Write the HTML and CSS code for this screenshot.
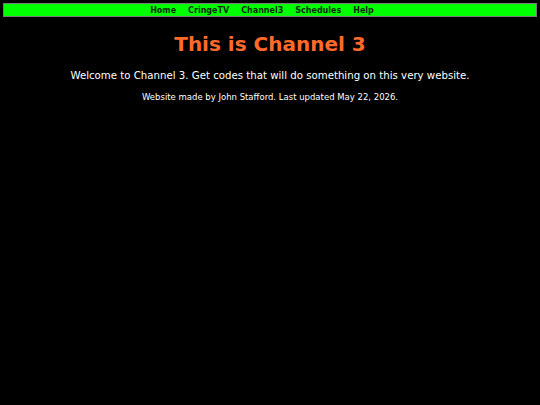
FILE: index.html
```html
<!DOCTYPE html>
<html>
<head>
<meta charset="utf-8">
<link rel="stylesheet" href="styles.css">
</head>
<body>
<nav class="nav">
  <a class="nav-link" href="#">Home</a>
  <a class="nav-link" href="#">CringeTV</a>
  <a class="nav-link" href="#">Channel3</a>
  <a class="nav-link" href="#">Schedules</a>
  <a class="nav-link" href="#">Help</a>
</nav>
<h1 class="title">This is Channel 3</h1>
<p class="intro">Welcome to Channel 3. Get codes that will do something on this very website.</p>
<p class="credits">Website made by John Stafford. Last updated May 22, 2026.</p>
</body>
</html>
```
FILE: styles.css
```css
html, body {
  background: #000;
}
body {
  margin: 3px;
  font-family: "DejaVu Sans", Verdana, sans-serif;
  color: #fff;
  text-align: center;
}
.nav {
  background: #00ff00;
  border: 1px solid #7a7a7a;
  display: flex;
  justify-content: center;
  height: 12px;
  align-items: center;
  padding-right: 16px;
}
.nav-link {
  color: #0a2a0a;
  font-weight: bold;
  font-size: 8px;
  text-decoration: none;
  padding: 0 6px;
}
.title {
  color: #ff6a2a;
  font-size: 20px;
  font-weight: bold;
  margin: 15px 0 0;
}
.intro {
  font-size: 10.2px;
  margin: 14px 0 0;
}
.credits {
  font-size: 8.5px;
  margin: 11px 0 0;
}
```
